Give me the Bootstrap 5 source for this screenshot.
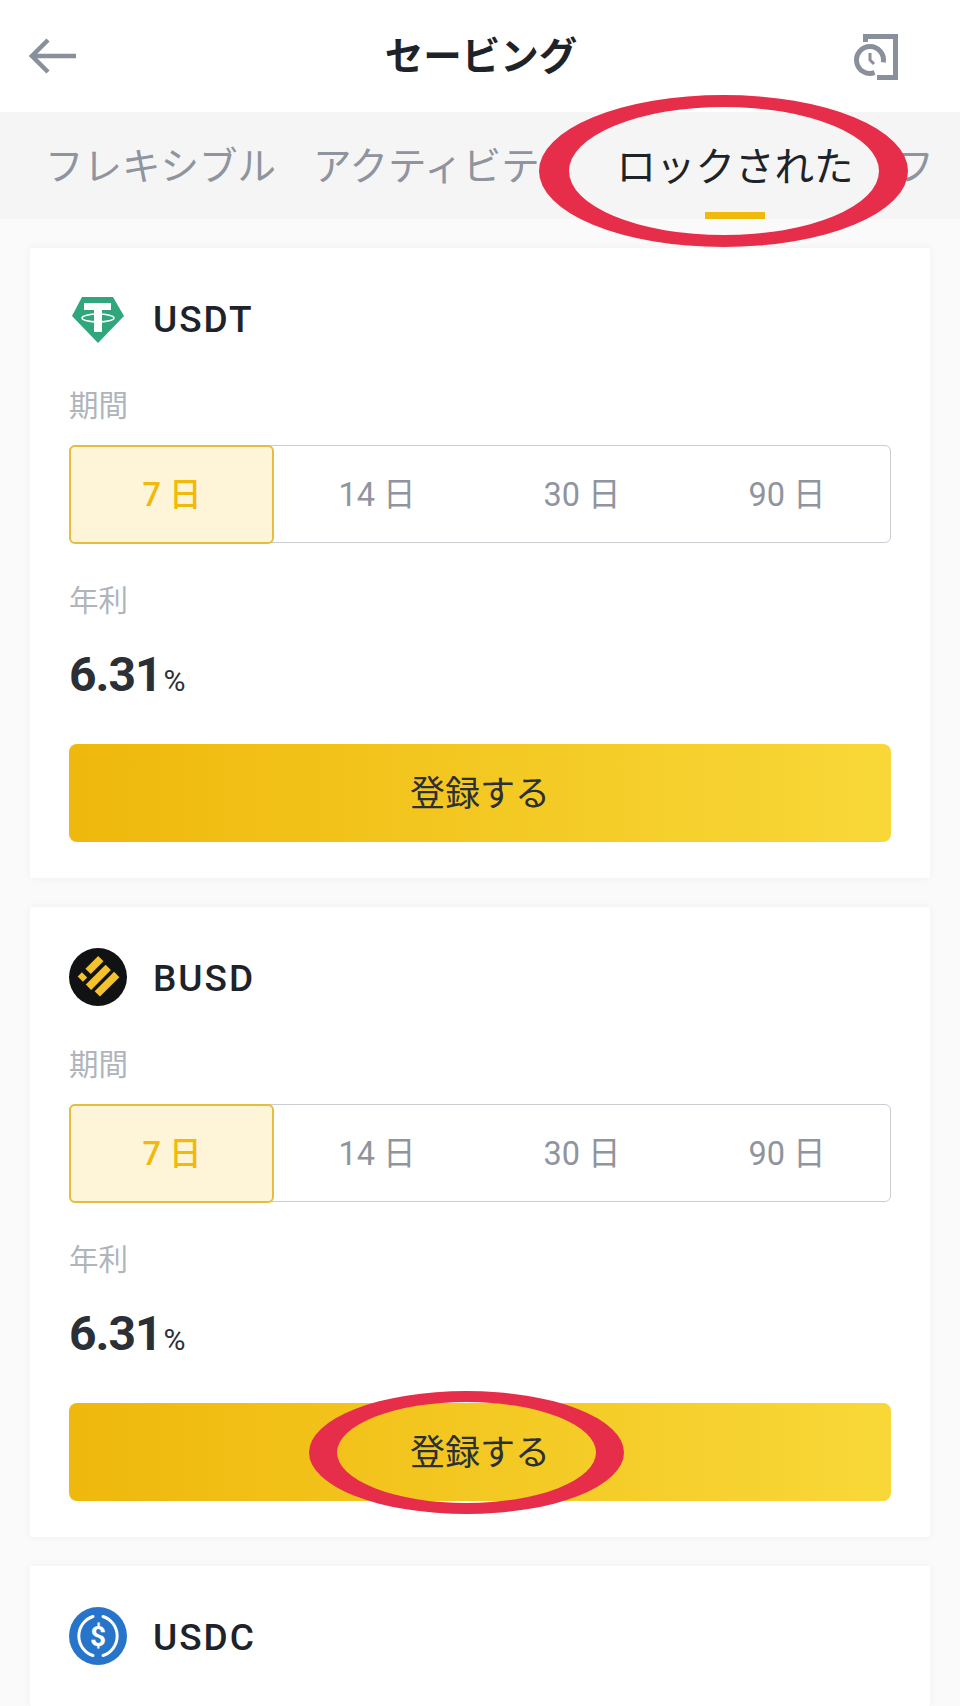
<!DOCTYPE html>
<html lang="ja">
<head>
    <meta charset="UTF-8">
    <meta name="viewport" content="width=device-width, initial-scale=1.0">
    <title>セービング</title>
    <link href="https://cdn.jsdelivr.net/npm/bootstrap@5.3.0/dist/css/bootstrap.min.css" rel="stylesheet">
    <style>
        body {
            font-family: Roboto, "Noto Sans CJK JP", sans-serif;
            background: #fafafa;
            color: #1e2329;
        }
        .shell {
            height: 1706px;
            width: 960px;
            overflow: hidden;
        }
        .top-bar {
            height: 112px;
            background: #fff;
            padding: 0 62px 0 29px;
        }
        .top-side {
            width: 48px;
        }
        .top-title {
            font-size: 38.500px;
            font-weight: 700;
            line-height: 1;
            padding-left: 35px;
            padding-top: 2px;
        }
        .tab-band {
            height: 107px;
            background: #f5f5f5;
            padding: 0 28px 0 45px;
        }
        .tab-strip {
            gap: 37px;
            overflow: hidden;
            height: 100%;
        }
        .tab-item {
            font-size: 38.500px;
            line-height: 1;
            color: #8f949e;
            white-space: nowrap;
            padding-top: 36px;
            flex-shrink: 0;
            height: 100%;
        }
        .tab-item.on {
            font-size: 39.500px;
            color: #1e2329;
            margin-left: 3.500px;
            margin-right: 5px;
        }
        .tab-line {
            width: 60px;
            height: 7px;
            background: #f0b90b;
            margin: 24px auto 0;
        }
        .coin-card {
            margin: 29px 30px 0;
            padding: 41px 39px 36px;
            border: 0;
            border-radius: 2px;
            background: #fff;
            box-shadow: 0 0 8px rgba(0, 0, 0, 0.05);
        }
        .coin-head {
            height: 58px;
            gap: 26px;
        }
        .coin-name {
            font-size: 37px;
            font-weight: 500;
            line-height: 1;
            letter-spacing: 2px;
            padding-top: 3px;
        }
        .field-label {
            font-size: 29.500px;
            line-height: 40px;
            color: #b0b4bb;
            margin-top: 39px;
        }
        .term-box {
            height: 98px;
            margin-top: 19px;
            border: 1.500px solid #c9ccd1;
            border-radius: 6px;
        }
        .term-item {
            width: 25%;
            font-size: 32.500px;
            color: #8f949e;
            padding: 3px 0 0 2px;
        }
        .term-item.on {
            margin: -1.500px 0 -1.500px -1.500px;
            border: 2.500px solid #e6bd3c;
            border-radius: 6px;
            background: #fef5d9;
            color: #f0b90b;
            font-weight: 500;
        }
        .field-label.rate-label {
            margin-top: 38px;
        }
        .rate-val {
            margin-top: 24px;
            height: 60px;
            line-height: 60px;
            font-size: 48px;
            font-weight: 700;
            letter-spacing: -1px;
            color: #2b2f36;
        }
        .rate-val small {
            font-size: 30px;
            font-weight: 400;
            margin-left: 2px;
            letter-spacing: 0;
        }
        .join-btn {
            display: block;
            width: 100%;
            height: 98px;
            margin-top: 39px;
            padding-top: 10px;
            border: 0;
            border-radius: 8px;
            background: linear-gradient(90deg, #efb80c, #f8d838);
            font-size: 35px;
            color: #2b2f36;
        }
        .ring-layer {
            position: absolute;
            top: 0;
            left: 0;
            pointer-events: none;
        }
    </style>
</head>
<body>
    <div class="shell position-relative d-flex flex-column">
        <div class="top-bar d-flex align-items-center justify-content-between">
            <svg class="top-side" width="48" height="36" viewBox="0 0 48 36" fill="none" stroke="#8a8f9c" stroke-width="4.500">
                <path d="M47 18H4M19 2 3 18l16 16"/>
            </svg>
            <div class="top-title">セービング</div>
            <svg class="top-side" width="48" height="48" viewBox="0 0 48 48" fill="none" stroke="#8a8f9c">
                <path stroke-width="5" d="M15.500 10V4.500H45.500V45.500H27"/>
                <path stroke-width="5" d="M24.600 40.700A13.500 13.500 0 1 1 33.300 30.300"/>
                <path stroke-width="3" d="M20 21v7l4 4"/>
            </svg>
        </div>

        <div class="tab-band">
            <div class="tab-strip d-flex">
                <div class="tab-item">フレキシブル</div>
                <div class="tab-item">アクティビティ</div>
                <div class="tab-item on">ロックされた<div class="tab-line"></div></div>
                <div class="tab-item">ファンド</div>
            </div>
        </div>

        <div class="card coin-card">
            <div class="coin-head d-flex align-items-center">
                <svg width="58" height="58" viewBox="0 0 58 58">
                    <path fill="#2fa67c" d="M13 8H44L55 27 29 54 3 27Z"/>
                    <path fill="#fff" d="M15 14H42V21H33V43H25V21H15Z"/>
                    <ellipse cx="29" cy="29" rx="16" ry="4" fill="none" stroke="#fff" stroke-width="1.500"/>
                </svg>
                <div class="coin-name">USDT</div>
            </div>
            <div class="field-label">期間</div>
            <div class="term-box d-flex">
                <div class="term-item on d-flex align-items-center justify-content-center">7 日</div>
                <div class="term-item d-flex align-items-center justify-content-center">14 日</div>
                <div class="term-item d-flex align-items-center justify-content-center">30 日</div>
                <div class="term-item d-flex align-items-center justify-content-center">90 日</div>
            </div>
            <div class="field-label rate-label">年利</div>
            <div class="rate-val">6.31<small>%</small></div>
            <button type="button" class="btn join-btn">登録する</button>
        </div>

        <div class="card coin-card">
            <div class="coin-head d-flex align-items-center">
                <svg width="58" height="58" viewBox="0 0 58 58">
                    <circle cx="29" cy="29" r="29" fill="#111214"/>
                    <g fill="#f4c22b" transform="rotate(-45 29 29)">
                        <rect x="15" y="14.250" width="6" height="7.500"/>
                        <rect x="26" y="14.250" width="18" height="7.500"/>
                        <rect x="15" y="25.750" width="28" height="7.500"/>
                        <rect x="16.500" y="36.750" width="27.500" height="7.500"/>
                    </g>
                </svg>
                <div class="coin-name">BUSD</div>
            </div>
            <div class="field-label">期間</div>
            <div class="term-box d-flex">
                <div class="term-item on d-flex align-items-center justify-content-center">7 日</div>
                <div class="term-item d-flex align-items-center justify-content-center">14 日</div>
                <div class="term-item d-flex align-items-center justify-content-center">30 日</div>
                <div class="term-item d-flex align-items-center justify-content-center">90 日</div>
            </div>
            <div class="field-label rate-label">年利</div>
            <div class="rate-val">6.31<small>%</small></div>
            <button type="button" class="btn join-btn">登録する</button>
        </div>

        <div class="card coin-card flex-grow-1">
            <div class="coin-head d-flex align-items-center">
                <svg width="58" height="58" viewBox="0 0 58 58">
                    <circle cx="29" cy="29" r="29" fill="#2775ca"/>
                    <g fill="none" stroke="#fff" stroke-width="3" stroke-linecap="round">
                        <path d="M24 9.500A20.500 20.500 0 0 0 24 48.500"/>
                        <path d="M34 9.500A20.500 20.500 0 0 1 34 48.500"/>
                    </g>
                    <text x="29" y="39" text-anchor="middle" font-family="Roboto, sans-serif" font-size="28" font-weight="700" fill="#fff">$</text>
                </svg>
                <div class="coin-name">USDC</div>
            </div>
        </div>

        <svg class="ring-layer" width="960" height="1706" viewBox="0 0 960 1706">
            <path fill="#e62e4b" fill-rule="evenodd" d="M539 171a184.500 76 0 1 0 369 0a184.500 76 0 1 0 -369 0ZM569 171a155 64 0 1 0 310 0a155 64 0 1 0 -310 0Z"/>
            <path fill="#e62e4b" fill-rule="evenodd" d="M309 1452.500a157.500 61.500 0 1 0 315 0a157.500 61.500 0 1 0 -315 0ZM337 1452.500a129.500 50.500 0 1 0 259 0a129.500 50.500 0 1 0 -259 0Z"/>
        </svg>
    </div>
    <script src="https://cdn.jsdelivr.net/npm/bootstrap@5.3.0/dist/js/bootstrap.bundle.min.js"></script>
</body>
</html>
